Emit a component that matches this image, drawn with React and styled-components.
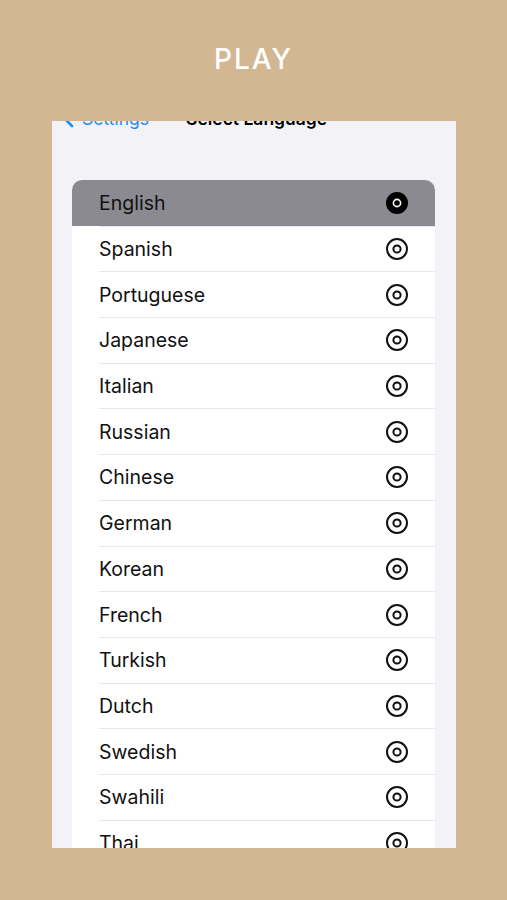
import React from "react";
import styled, { createGlobalStyle } from "styled-components";

const languages = [
  "English",
  "Spanish",
  "Portuguese",
  "Japanese",
  "Italian",
  "Russian",
  "Chinese",
  "German",
  "Korean",
  "French",
  "Turkish",
  "Dutch",
  "Swedish",
  "Swahili",
  "Thai",
];

const Radio = ({ selected }) =>
  selected ? (
    <svg width="24" height="24" viewBox="0 0 24 24">
      <circle cx="12" cy="12" r="11" fill="#000" />
      <circle cx="12" cy="12" r="3.6" fill="none" stroke="#fff" strokeWidth="1.6" />
    </svg>
  ) : (
    <svg width="24" height="24" viewBox="0 0 24 24">
      <circle cx="12" cy="12" r="10" fill="none" stroke="#111" strokeWidth="2" />
      <circle cx="12" cy="12" r="3.6" fill="none" stroke="#111" strokeWidth="2" />
    </svg>
  );

const App = () => {
  return (
    <>
      <GlobalStyle />
      <Page>
        <Title>PLAY</Title>
        <Screen>
          <Nav>
            <Back>
              <svg width="12" height="20" viewBox="0 0 12 20">
                <path d="M10 2 L2 10 L10 18" fill="none" stroke="#1a8cff" strokeWidth="2.6" strokeLinecap="round" strokeLinejoin="round" />
              </svg>
              <span>Settings</span>
            </Back>
            <NavTitle>Select Language</NavTitle>
          </Nav>
          <Card>
            {languages.map((lang, i) => (
              <Row key={lang} selected={i === 0}>
                <RowInner first={i === 0}>
                  <Label>{lang}</Label>
                  <Radio selected={i === 0} />
                </RowInner>
              </Row>
            ))}
          </Card>
        </Screen>
      </Page>
    </>
  );
};

const GlobalStyle = createGlobalStyle`
  body {
    margin: 0;
    background: #d3b692;
    font-family: Inter, "Liberation Sans", sans-serif;
  }
`;

const Page = styled.div`
  width: 507px;
  height: 900px;
  background: #d3b692;
  overflow: hidden;
`;

const Title = styled.h1`
  margin: 0;
  height: 121px;
  display: flex;
  align-items: center;
  justify-content: center;
  padding-bottom: 4px;
  box-sizing: border-box;
  color: #fff;
  font-size: 28px;
  font-weight: 500;
  letter-spacing: 2px;
`;

const Screen = styled.div`
  margin-left: 52px;
  width: 404px;
  height: 727px;
  background: #f2f2f7;
  overflow: hidden;
  padding: 0 21px 0 20px;
  box-sizing: border-box;
`;

const Nav = styled.div`
  margin: -19px -21px 0 -20px;
  height: 32px;
  display: flex;
  align-items: center;
  padding-left: 10px;
  font-size: 17.5px;
`;

const Back = styled.div`
  display: flex;
  align-items: center;
  gap: 8px;
  color: #1a8cff;
  width: 124px;
`;

const NavTitle = styled.div`
  font-weight: 600;
  color: #000;
`;

const Card = styled.div`
  margin-top: 46px;
  background: #fff;
  border-radius: 10px 10px 0 0;
  overflow: hidden;
`;

const Row = styled.div`
  height: 45.7px;
  padding-left: 27px;
  background: ${(p) => (p.selected ? "#8a8a90" : "#fff")};
`;

const RowInner = styled.div`
  height: 100%;
  box-sizing: border-box;
  display: flex;
  align-items: center;
  justify-content: space-between;
  padding-right: 26px;
  border-top: ${(p) => (p.first ? "none" : "1px solid #e8e8ec")};
`;

const Label = styled.span`
  font-size: 19.5px;
  color: #111;
`;

export default App;
